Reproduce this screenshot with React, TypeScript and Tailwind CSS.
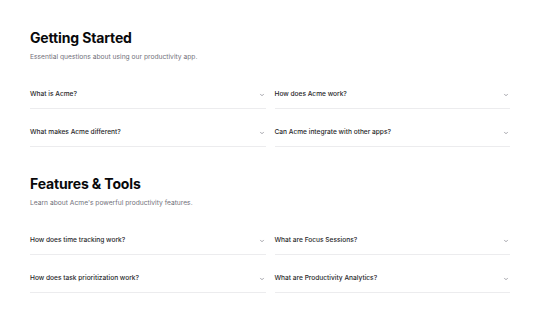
import { ChevronDown } from "lucide-react";

type Section = {
  title: string;
  description: string;
  questions: string[];
};

const sections: Section[] = [
  {
    title: "Getting Started",
    description: "Essential questions about using our productivity app.",
    questions: [
      "What is Acme?",
      "How does Acme work?",
      "What makes Acme different?",
      "Can Acme integrate with other apps?",
    ],
  },
  {
    title: "Features & Tools",
    description: "Learn about Acme's powerful productivity features.",
    questions: [
      "How does time tracking work?",
      "What are Focus Sessions?",
      "How does task prioritization work?",
      "What are Productivity Analytics?",
    ],
  },
];

const FaqItem = ({ question }: { question: string }) => (
  <button className="flex h-[30px] w-full items-center justify-between border-b border-[#ececee] pt-[2px] text-left">
    <span className="text-[6.6px] font-medium text-[#27272a]">{question}</span>
    <ChevronDown className="mr-[1px] h-[6px] w-[6px] text-[#71717a]" strokeWidth={2.5} />
  </button>
);

export default function App() {
  return (
    <div className="min-h-[323px] w-full bg-white font-['Inter',sans-serif]">
      <div className="flex flex-col gap-[28px] px-[30px] pt-[29px]">
        {sections.map((section) => (
          <section key={section.title}>
            <h2 className="text-[14px] font-bold leading-[17px] tracking-[-0.01em] text-[#09090b]">
              {section.title}
            </h2>
            <p className="mt-[6px] text-[6.7px] leading-[10px] text-[#71717a]">
              {section.description}
            </p>
            <div className="mt-[17px] grid grid-cols-2 gap-x-[9px] gap-y-2">
              {section.questions.map((q) => (
                <FaqItem key={q} question={q} />
              ))}
            </div>
          </section>
        ))}
      </div>
    </div>
  );
}
